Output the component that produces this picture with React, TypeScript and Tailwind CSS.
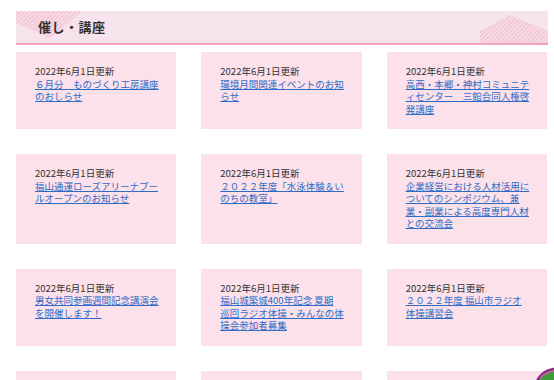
import React from "react";

type Item = { date: string; lines: string[] };

const items: Item[] = [
  { date: "2022年6月1日更新", lines: ["６月分　ものづくり工房講座", "のおしらせ"] },
  { date: "2022年6月1日更新", lines: ["環境月間関連イベントのお知", "らせ"] },
  { date: "2022年6月1日更新", lines: ["高西・本郷・神村コミュニテ", "ィセンター　三館合同人権啓", "発講座"] },
  { date: "2022年6月1日更新", lines: ["福山通運ローズアリーナプー", "ルオープンのお知らせ"] },
  { date: "2022年6月1日更新", lines: ["２０２２年度「水泳体験＆い", "のちの教室」"] },
  {
    date: "2022年6月1日更新",
    lines: ["企業経営における人材活用に", "ついてのシンポジウム、兼", "業・副業による高度専門人材", "との交流会"],
  },
  { date: "2022年6月1日更新", lines: ["男女共同参画週間記念講演会", "を開催します！"] },
  { date: "2022年6月1日更新", lines: ["福山城築城400年記念 夏期", "巡回ラジオ体操・みんなの体", "操会参加者募集"] },
  { date: "2022年6月1日更新", lines: ["２０２２年度 福山市ラジオ", "体操講習会"] },
];

function Stripes({ id }: { id: string }) {
  return (
    <pattern id={id} width="3" height="3" patternUnits="userSpaceOnUse" patternTransform="rotate(45)">
      <rect width="3" height="3" fill="#f7dbe6" />
      <line x1="0" y1="0" x2="0" y2="3" stroke="#eeb2c8" strokeWidth="1.4" />
    </pattern>
  );
}

function Card({ item }: { item: Item }) {
  return (
    <div className="bg-[#fce0ea] pl-[19px] pr-[14px] pt-[13px] pb-[14px] text-[9.5px] leading-[12.5px]">
      <p className="text-[#333333]">{item.date}</p>
      <a href="#" className="text-[#2c6cc6] underline underline-offset-[1px] whitespace-nowrap">
        {item.lines.map((l, i) => (
          <React.Fragment key={i}>
            {l}
            {i < item.lines.length - 1 && <br />}
          </React.Fragment>
        ))}
      </a>
    </div>
  );
}

export default function App() {
  return (
    <div
      className="relative w-[554px] h-[380px] overflow-hidden bg-white pl-[16px] pr-[6px] pt-[11px]"
      style={{ fontFamily: '"Noto Sans CJK JP", "Noto Sans", sans-serif' }}
    >
      <div className="relative h-[34px] bg-[#f7e3eb] border-b-2 border-[#f0a4c0] flex items-center">
        <svg className="absolute left-0 top-0" width="68" height="28" viewBox="0 0 68 28">
          <defs>
            <Stripes id="hl" />
          </defs>
          <polygon points="0,0 67,0 34,27 0,12" fill="url(#hl)" />
        </svg>
        <svg className="absolute right-0 bottom-0" width="68" height="28" viewBox="0 0 68 28">
          <defs>
            <Stripes id="hr" />
          </defs>
          <polygon points="0,28 0,16 30,0 68,16 68,28" fill="url(#hr)" />
        </svg>
        <h2 className="relative pl-[22px] text-[13px] font-bold text-[#333333] tracking-[0.5px]">催し・講座</h2>
      </div>

      <div className="mt-[7px] mr-[1px] grid grid-cols-3 gap-x-[25px] gap-y-[25px]">
        {items.map((it, i) => (
          <Card key={i} item={it} />
        ))}
        <div className="h-[76px] bg-[#fce0ea]" />
        <div className="h-[76px] bg-[#fce0ea]" />
        <div className="h-[76px] bg-[#fce0ea]" />
      </div>

      <svg className="absolute right-0 bottom-0" width="22" height="14" viewBox="0 0 22 14">
        <circle cx="24" cy="24" r="21" fill="#3f9c3a" stroke="#8a2c86" strokeWidth="2.5" />
        <path d="M8 12 Q14 6 22 5" stroke="#d35aa8" strokeWidth="1.5" fill="none" />
      </svg>
    </div>
  );
}
